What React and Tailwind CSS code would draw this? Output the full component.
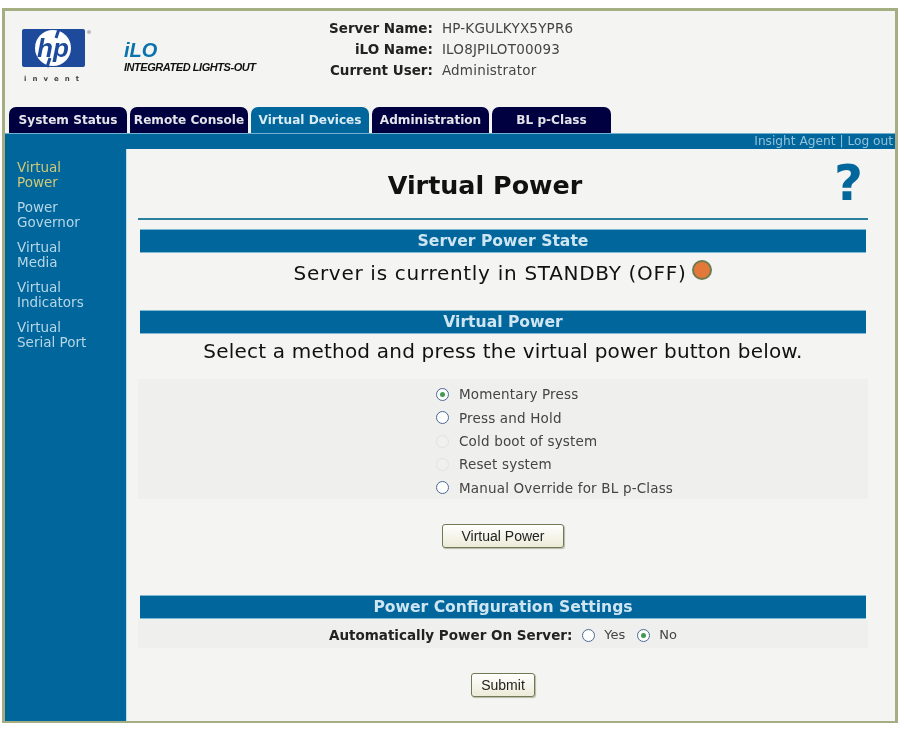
const tabs = [
  { label: "System Status", width: "w-[118px]" },
  { label: "Remote Console", width: "w-[118px]" },
  { label: "Virtual Devices", width: "w-[118px]", active: true },
  { label: "Administration", width: "w-[117px]" },
  { label: "BL p-Class", width: "w-[119px]" },
];

const sideLinks = [
  ["Virtual", "Power"],
  ["Power", "Governor"],
  ["Virtual", "Media"],
  ["Virtual", "Indicators"],
  ["Virtual", "Serial Port"],
];

const powerOptions = [
  { label: "Momentary Press", checked: true },
  { label: "Press and Hold" },
  { label: "Cold boot of system", disabled: true },
  { label: "Reset system", disabled: true },
  { label: "Manual Override for BL p-Class" },
];

function Radio({ checked, disabled }) {
  return (
    <span
      className={
        "flex h-[13px] w-[13px] shrink-0 items-center justify-center rounded-full border " +
        (disabled ? "border-[#e2e2e0] bg-[#f0f0ee]" : "border-[#4a6a94] bg-white")
      }
    >
      {checked && <span className="h-[5px] w-[5px] rounded-full bg-[#3f9a52]" />}
    </span>
  );
}

function SectionBar({ children, className = "" }) {
  return (
    <div
      className={
        "mx-[2px] flex h-[24px] items-center justify-center border-y border-[#7fb8d2] bg-[#00669b] pt-[2px] text-[15.6px] font-bold text-[#cfe6f2] " +
        className
      }
    >
      {children}
    </div>
  );
}

function HpLogo() {
  return (
    <svg width="72" height="62" viewBox="0 0 72 62" className="shrink-0">
      <rect x="0" y="0" width="63" height="38" rx="2" fill="#1d4a9b" />
      <circle cx="31" cy="19" r="18" fill="#fff" />
      <text x="31" y="28" textAnchor="middle" fontFamily="Liberation Sans, sans-serif" fontStyle="italic" fontWeight="700" fontSize="26" fill="#1d4a9b">
        hp
      </text>
      <path d="M37 0 L34 9 M25 38 L28 29" stroke="#1d4a9b" strokeWidth="3" />
      <circle cx="67" cy="3" r="2" fill="#b8b8c0" />
      <text x="2" y="52" fontFamily="DejaVu Sans, sans-serif" fontWeight="700" fontSize="7" letterSpacing="6" fill="#444">
        invent
      </text>
    </svg>
  );
}

function Button({ children, className = "" }) {
  return (
    <button
      className={
        "h-[24px] rounded-[3px] border border-[#6f7a55] bg-gradient-to-b from-white to-[#ecebd8] font-['Liberation_Sans',sans-serif] text-[14px] text-[#222] shadow-[1px_1px_1px_#b8b8a8] " +
        className
      }
    >
      {children}
    </button>
  );
}

export default function App() {
  return (
    <div className="h-[729px] w-[904px] overflow-hidden bg-white pt-[8px] pb-[6px] pl-[2px] pr-[6px] font-['DejaVu_Sans',sans-serif] blur-[0.4px]">
      <div className="flex h-full flex-col border-t-[3px] border-l-[3px] border-r-[3px] border-b-[2px] border-[#a5ad82] bg-[#f4f4f2]">
        {/* header */}
        <div className="flex h-[95px] shrink-0">
          <div className="w-[119px] pl-[17px] pt-[18px]">
            <HpLogo />
          </div>
          <div className="w-[205px] pt-[27px] font-['Liberation_Sans',sans-serif]">
            <div className="text-[20px] leading-[24px] font-bold text-[#0a72ac] italic">iLO</div>
            <div className="text-[11px] leading-[10px] font-bold tracking-[-0.45px] text-[#111] italic">INTEGRATED LIGHTS-OUT</div>
          </div>
          <div className="grid h-fit grid-cols-[auto_auto] gap-x-[9px] pt-[7px] text-[13.5px] leading-[21px] tracking-[0.2px] text-[#444]">
            <span className="text-right font-bold tracking-normal text-[#222]">Server Name:</span>
            <span>HP-KGULKYX5YPR6</span>
            <span className="text-right font-bold tracking-normal text-[#222]">iLO Name:</span>
            <span>ILO8JPILOT00093</span>
            <span className="text-right font-bold tracking-normal text-[#222]">Current User:</span>
            <span>Administrator</span>
          </div>
        </div>

        {/* tabs */}
        <div className="flex h-[27px] shrink-0 items-end gap-[3px] pl-[4px]">
          {tabs.map((tab) => (
            <div
              key={tab.label}
              className={
                "flex h-[26px] items-center justify-center rounded-t-[7px] text-[12.1px] font-bold " +
                tab.width +
                (tab.active ? " bg-[#00669b] text-[#d9ecf5]" : " bg-[#000040] text-[#e4e4ea]")
              }
            >
              {tab.label}
            </div>
          ))}
        </div>

        {/* link bar */}
        <div className="flex h-[16px] shrink-0 items-center justify-end border-t border-[#6fb0cf] bg-[#00669b] pr-[2px] text-[12.2px] text-[#93c2da]">
          Insight Agent | Log out
        </div>

        <div className="flex min-h-0 flex-1">
          {/* sidebar */}
          <div className="flex w-[122px] shrink-0 flex-col gap-[10px] border-r border-[#bcdcea] bg-[#00669b] pt-[11px] pl-[12px] text-[13.5px] leading-[15px] text-[#b5d6e6]">
            {sideLinks.map((link, i) => (
              <div key={link[1]} className={i === 0 ? "text-[#d0c878]" : ""}>
                <div>{link[0]}</div>
                <div>{link[1]}</div>
              </div>
            ))}
          </div>

          {/* main */}
          <div className="min-w-0 flex-1 pl-[11px] pr-[27px]">
            <div className="relative flex h-[71px] items-center justify-center border-b-2 border-[#2a7f9f] pt-[4px]">
              <h1 className="mr-[36px] text-[25.4px] font-bold text-[#111]">Virtual Power</h1>
              <span className="absolute right-[5px] top-[4px] text-[50px] leading-[60px] font-bold text-[#00669b]">?</span>
            </div>

            <SectionBar className="mt-[9px]">Server Power State</SectionBar>
            <div className="flex h-[35px] items-center justify-center gap-[6px] pt-[5px] text-[20px] tracking-[0.7px] text-[#111]">
              <span>Server is currently in STANDBY (OFF)</span>
              <span className="mb-[7px] h-[20px] w-[20px] rounded-full border-2 border-[#6e7a50] bg-[#e2793a]" />
            </div>

            <SectionBar className="mt-[22px]">Virtual Power</SectionBar>
            <div className="flex h-[34px] items-center justify-center text-[20px] tracking-[0.2px] text-[#111]">
              Select a method and press the virtual power button below.
            </div>

            <div className="mt-[11px] flex h-[120px] flex-col justify-center gap-[7.3px] bg-[#efefed] pt-[4px] pl-[298px] text-[13.5px] leading-[16px] tracking-[0.17px] text-[#444]">
              {powerOptions.map((option) => (
                <div key={option.label} className="flex items-center gap-[10px]">
                  <Radio checked={option.checked} disabled={option.disabled} />
                  <span>{option.label}</span>
                </div>
              ))}
            </div>

            <div className="mt-[25px] flex justify-center">
              <Button className="w-[122px]">Virtual Power</Button>
            </div>

            <SectionBar className="mt-[47px]">Power Configuration Settings</SectionBar>
            <div className="flex h-[29px] items-center justify-center gap-[9px] bg-[#efefed] pt-[3px] text-[13px] text-[#444]">
              <span className="mr-[1px] text-[13.5px] font-bold text-[#222]">Automatically Power On Server:</span>
              <Radio />
              <span className="mr-[3px]">Yes</span>
              <Radio checked />
              <span>No</span>
            </div>

            <div className="mt-[25px] flex justify-center">
              <Button className="w-[64px]">Submit</Button>
            </div>
          </div>
        </div>
      </div>
    </div>
  );
}
